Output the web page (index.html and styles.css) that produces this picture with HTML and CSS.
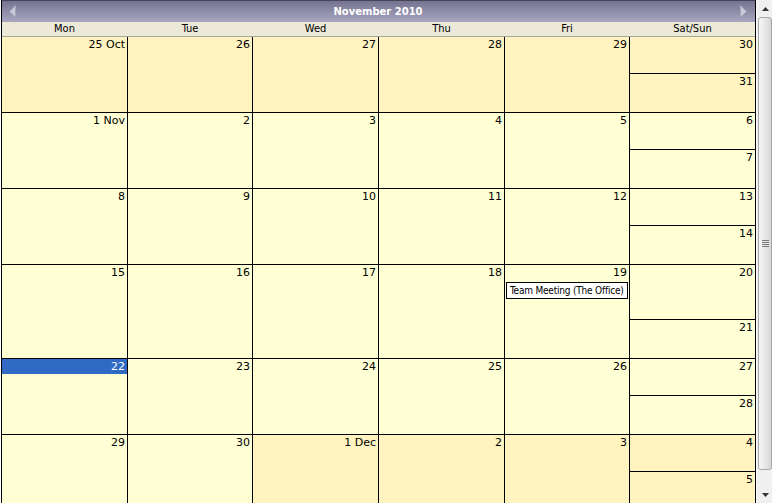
FILE: index.html
```html
<!DOCTYPE html>
<html>
<head>
<meta charset="utf-8">
<link rel="stylesheet" href="styles.css">
</head>
<body>
<div class="app">
  <div class="cal">
    <div class="title">
      <svg class="arrow" width="7" height="13" viewBox="0 0 7 13"><polygon points="6.5,0.5 6.5,12.5 0.5,6.5" fill="#c9c8d6" stroke="#a4a3b8" stroke-width="1"/></svg>
      <span class="title-text">November 2010</span>
      <svg class="arrow" width="7" height="13" viewBox="0 0 7 13"><polygon points="0.5,0.5 0.5,12.5 6.5,6.5" fill="#c9c8d6" stroke="#a4a3b8" stroke-width="1"/></svg>
    </div>
    <div class="days">
      <div>Mon</div><div>Tue</div><div>Wed</div><div>Thu</div><div>Fri</div><div>Sat/Sun</div>
    </div>
    <div class="grid">
      <div class="cell other"><div class="dh">25 Oct</div></div>
      <div class="cell other"><div class="dh">26</div></div>
      <div class="cell other"><div class="dh">27</div></div>
      <div class="cell other"><div class="dh">28</div></div>
      <div class="cell other"><div class="dh">29</div></div>
      <div class="wk"><div class="half sat other"><div class="dh">30</div></div><div class="half sun other"><div class="dh">31</div></div></div>

      <div class="cell"><div class="dh">1 Nov</div></div>
      <div class="cell"><div class="dh">2</div></div>
      <div class="cell"><div class="dh">3</div></div>
      <div class="cell"><div class="dh">4</div></div>
      <div class="cell"><div class="dh">5</div></div>
      <div class="wk"><div class="half sat"><div class="dh">6</div></div><div class="half sun"><div class="dh">7</div></div></div>

      <div class="cell"><div class="dh">8</div></div>
      <div class="cell"><div class="dh">9</div></div>
      <div class="cell"><div class="dh">10</div></div>
      <div class="cell"><div class="dh">11</div></div>
      <div class="cell"><div class="dh">12</div></div>
      <div class="wk"><div class="half sat"><div class="dh">13</div></div><div class="half sun"><div class="dh">14</div></div></div>

      <div class="cell"><div class="dh">15</div></div>
      <div class="cell"><div class="dh">16</div></div>
      <div class="cell"><div class="dh">17</div></div>
      <div class="cell"><div class="dh">18</div></div>
      <div class="cell"><div class="dh">19</div><div class="event">Team Meeting (The Office)</div></div>
      <div class="wk"><div class="half sat"><div class="dh">20</div></div><div class="half sun"><div class="dh">21</div></div></div>

      <div class="cell"><div class="dh today">22</div></div>
      <div class="cell"><div class="dh">23</div></div>
      <div class="cell"><div class="dh">24</div></div>
      <div class="cell"><div class="dh">25</div></div>
      <div class="cell"><div class="dh">26</div></div>
      <div class="wk"><div class="half sat"><div class="dh">27</div></div><div class="half sun"><div class="dh">28</div></div></div>

      <div class="cell"><div class="dh">29</div></div>
      <div class="cell"><div class="dh">30</div></div>
      <div class="cell other"><div class="dh">1 Dec</div></div>
      <div class="cell other"><div class="dh">2</div></div>
      <div class="cell other"><div class="dh">3</div></div>
      <div class="wk"><div class="half sat other"><div class="dh">4</div></div><div class="half sun other"><div class="dh">5</div></div></div>
    </div>
  </div>
  <div class="sb">
    <div class="sb-btn"><svg width="7" height="4" viewBox="0 0 7 4"><polygon points="3.5,0 7,4 0,4" fill="#333"/></svg></div>
    <div class="sb-thumb">
      <svg width="7" height="8" viewBox="0 0 7 8"><rect x="0" y="0" width="7" height="1" fill="#7a7a7a"/><rect x="0" y="2" width="7" height="1" fill="#7a7a7a"/><rect x="0" y="4" width="7" height="1" fill="#7a7a7a"/><rect x="0" y="6" width="7" height="1" fill="#7a7a7a"/></svg>
    </div>
    <div class="sb-track"></div>
    <div class="sb-btn"><svg width="7" height="4" viewBox="0 0 7 4"><polygon points="0,0 7,0 3.5,4" fill="#333"/></svg></div>
  </div>
</div>
</body>
</html>
```

FILE: styles.css
```css
html, body {
  margin: 0;
  padding: 0;
  background: #fff;
}
body {
  font-family: "DejaVu Sans", Verdana, sans-serif;
  font-size: 11px;
  color: #000;
}
.app {
  display: flex;
  width: 772px;
  height: 503px;
  overflow: hidden;
}
.cal {
  margin-left: 1px;
  width: 753px;
  border-left: 1px solid #000;
  border-right: 1px solid #000;
  display: flex;
  flex-direction: column;
  flex: none;
}
.title {
  height: 21px;
  border-top: 1px solid #45445a;
  background: linear-gradient(#75738f, #a8a6c1);
  display: flex;
  align-items: center;
  padding: 0 8px 0 7px;
}
.arrow {
  display: block;
  flex: none;
}
.title-text {
  flex: 1;
  text-align: center;
  color: #fff;
  font-weight: bold;
  font-size: 10px;
  line-height: 21px;
}
.days {
  display: grid;
  grid-template-columns: 125px 124px 125px 125px 124px 125px;
  column-gap: 1px;
  height: 14px;
  background: #ece9d8;
  border-bottom: 1px solid #a7a69a;
  font-family: "DejaVu Sans Condensed", "DejaVu Sans", sans-serif;
  font-size: 11px;
  line-height: 14px;
  text-align: center;
}
.grid {
  display: grid;
  grid-template-columns: 125px 124px 125px 125px 124px 125px;
  grid-template-rows: 75px 75px 75px 93px 75px 75px;
  gap: 1px;
  background: #000;
}
.cell, .half {
  background: #ffffd5;
}
.cell.other, .half.other {
  background: #fff4c0;
}
.wk {
  display: flex;
  flex-direction: column;
  gap: 1px;
  background: #000;
}
.sat {
  flex: 1;
}
.sun {
  flex: none;
  height: 38px;
}
.dh {
  box-sizing: border-box;
  height: 15px;
  padding: 1px 2px 0 2px;
  line-height: 14px;
  text-align: right;
}
.dh.today {
  background: #316ac5;
  color: #fff;
}
.event {
  margin: 2px 1px 0 1px;
  border: 1px solid #000;
  background: #fff;
  height: 15px;
  line-height: 15px;
  padding: 0 3px;
  font-family: "DejaVu Sans Condensed", "DejaVu Sans", sans-serif;
  font-size: 10px;
  letter-spacing: -0.2px;
  white-space: nowrap;
  overflow: hidden;
}
.sb {
  width: 16px;
  flex: none;
  display: flex;
  flex-direction: column;
  background: #f0f0f0;
  border-left: 1px solid #fafafa;
}
.sb-btn {
  height: 17px;
  flex: none;
  display: flex;
  align-items: center;
  justify-content: center;
}
.sb-btn svg {
  display: block;
}
.sb-thumb {
  flex: none;
  height: 451px;
  margin: 0 1px 0 1px;
  border: 1px solid #a8a8a8;
  border-radius: 3px;
  background: linear-gradient(to right, #f7f7f7, #e9e9e9 45%, #d6d6d6);
  display: flex;
  align-items: center;
  justify-content: center;
}
.sb-thumb svg {
  display: block;
}
.sb-track {
  flex: 1;
}
```
